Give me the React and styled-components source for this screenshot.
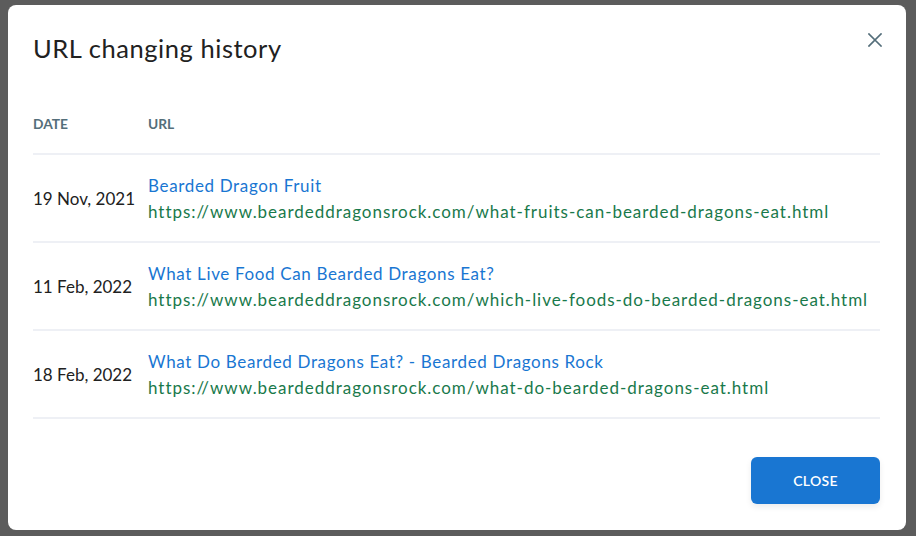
import React from 'react'
import styled, { createGlobalStyle } from 'styled-components'

const COLORS = {
  overlay: '#5c5c5c',
  text: '#212121',
  muted: '#546e7a',
  link: '#1976d2',
  url: '#19794b',
  divider: '#eef0f5',
  primary: '#1976d2',
}

const HISTORY = [
  {
    date: '19 Nov, 2021',
    title: 'Bearded Dragon Fruit',
    url: 'https://www.beardeddragonsrock.com/what-fruits-can-bearded-dragons-eat.html',
  },
  {
    date: '11 Feb, 2022',
    title: 'What Live Food Can Bearded Dragons Eat?',
    url: 'https://www.beardeddragonsrock.com/which-live-foods-do-bearded-dragons-eat.html',
  },
  {
    date: '18 Feb, 2022',
    title: 'What Do Bearded Dragons Eat? - Bearded Dragons Rock',
    url: 'https://www.beardeddragonsrock.com/what-do-bearded-dragons-eat.html',
  },
]

const GlobalStyle = createGlobalStyle`
  html, body {
    margin: 0;
    padding: 0;
  }
  body {
    font-family: Lato, 'Open Sans', sans-serif;
    background: ${COLORS.overlay};
  }
`

const CloseIcon = () => (
  <svg width='14' height='14' viewBox='0 0 14 14' fill='none'>
    <path d='M1 1L13 13M13 1L1 13' stroke={COLORS.muted} strokeWidth='1.7' strokeLinecap='square' />
  </svg>
)

const App = () => {
  return (
    <>
      <GlobalStyle />
      <Backdrop>
        <Dialog role='dialog'>
          <Header>
            <Title>URL changing history</Title>
            <IconButton aria-label='Close'>
              <CloseIcon />
            </IconButton>
          </Header>
          <Table>
            <thead>
              <tr>
                <HeadCell>Date</HeadCell>
                <HeadCell>URL</HeadCell>
              </tr>
            </thead>
            <tbody>
              {HISTORY.map((item) => (
                <Row key={item.date}>
                  <DateCell>{item.date}</DateCell>
                  <UrlCell>
                    <PageTitle>{item.title}</PageTitle>
                    <PageUrl>{item.url}</PageUrl>
                  </UrlCell>
                </Row>
              ))}
            </tbody>
          </Table>
          <Footer>
            <PrimaryButton>Close</PrimaryButton>
          </Footer>
        </Dialog>
      </Backdrop>
    </>
  )
}

const Backdrop = styled.div`
  height: 536px;
  box-sizing: border-box;
  padding: 5px 10px 6px 8px;
  display: flex;
`

const Dialog = styled.div`
  flex: 1;
  background: #fff;
  border-radius: 8px;
  padding: 0 26px 0 25px;
  display: flex;
  flex-direction: column;
`

const Header = styled.div`
  display: flex;
  justify-content: space-between;
  align-items: flex-start;
  padding-top: 27px;
`

const Title = styled.h2`
  margin: 0;
  font-size: 25.5px;
  font-weight: 400;
  line-height: 32px;
  letter-spacing: 0.55px;
  color: ${COLORS.text};
`

const IconButton = styled.button`
  border: none;
  background: none;
  padding: 0;
  margin: 1px -2px 0 0;
  width: 14px;
  height: 14px;
  display: flex;
  cursor: pointer;
`

const Table = styled.table`
  margin-top: 29px;
  width: 100%;
  border-collapse: collapse;
`

const HeadCell = styled.th`
  text-align: left;
  padding: 23px 0 21px;
  font-size: 13.8px;
  line-height: 16px;
  font-weight: 700;
  text-transform: uppercase;
  color: ${COLORS.muted};
  border-bottom: 2px solid ${COLORS.divider};
  &:first-child {
    width: 115px;
  }
`

const Row = styled.tr`
  border-bottom: 2px solid ${COLORS.divider};
`

const DateCell = styled.td`
  padding: 18px 0 16px;
  vertical-align: middle;
  font-size: 17px;
  line-height: 26px;
  color: ${COLORS.text};
  white-space: nowrap;
`

const UrlCell = styled.td`
  padding: 18px 0 16px;
  font-size: 17px;
  line-height: 26px;
  white-space: nowrap;
`

const PageTitle = styled.div`
  color: ${COLORS.link};
  letter-spacing: 0.65px;
`

const PageUrl = styled.div`
  color: ${COLORS.url};
  letter-spacing: 0.97px;
`

const Footer = styled.div`
  display: flex;
  justify-content: flex-end;
  margin-top: 38px;
`

const PrimaryButton = styled.button`
  width: 129px;
  height: 47px;
  border: none;
  border-radius: 6px;
  background: ${COLORS.primary};
  color: #fff;
  font-family: Lato, sans-serif;
  font-size: 14px;
  font-weight: 600;
  text-transform: uppercase;
  letter-spacing: 0.3px;
  box-shadow: 0 3px 6px rgba(0, 0, 0, 0.08);
  cursor: pointer;
`

export default App
